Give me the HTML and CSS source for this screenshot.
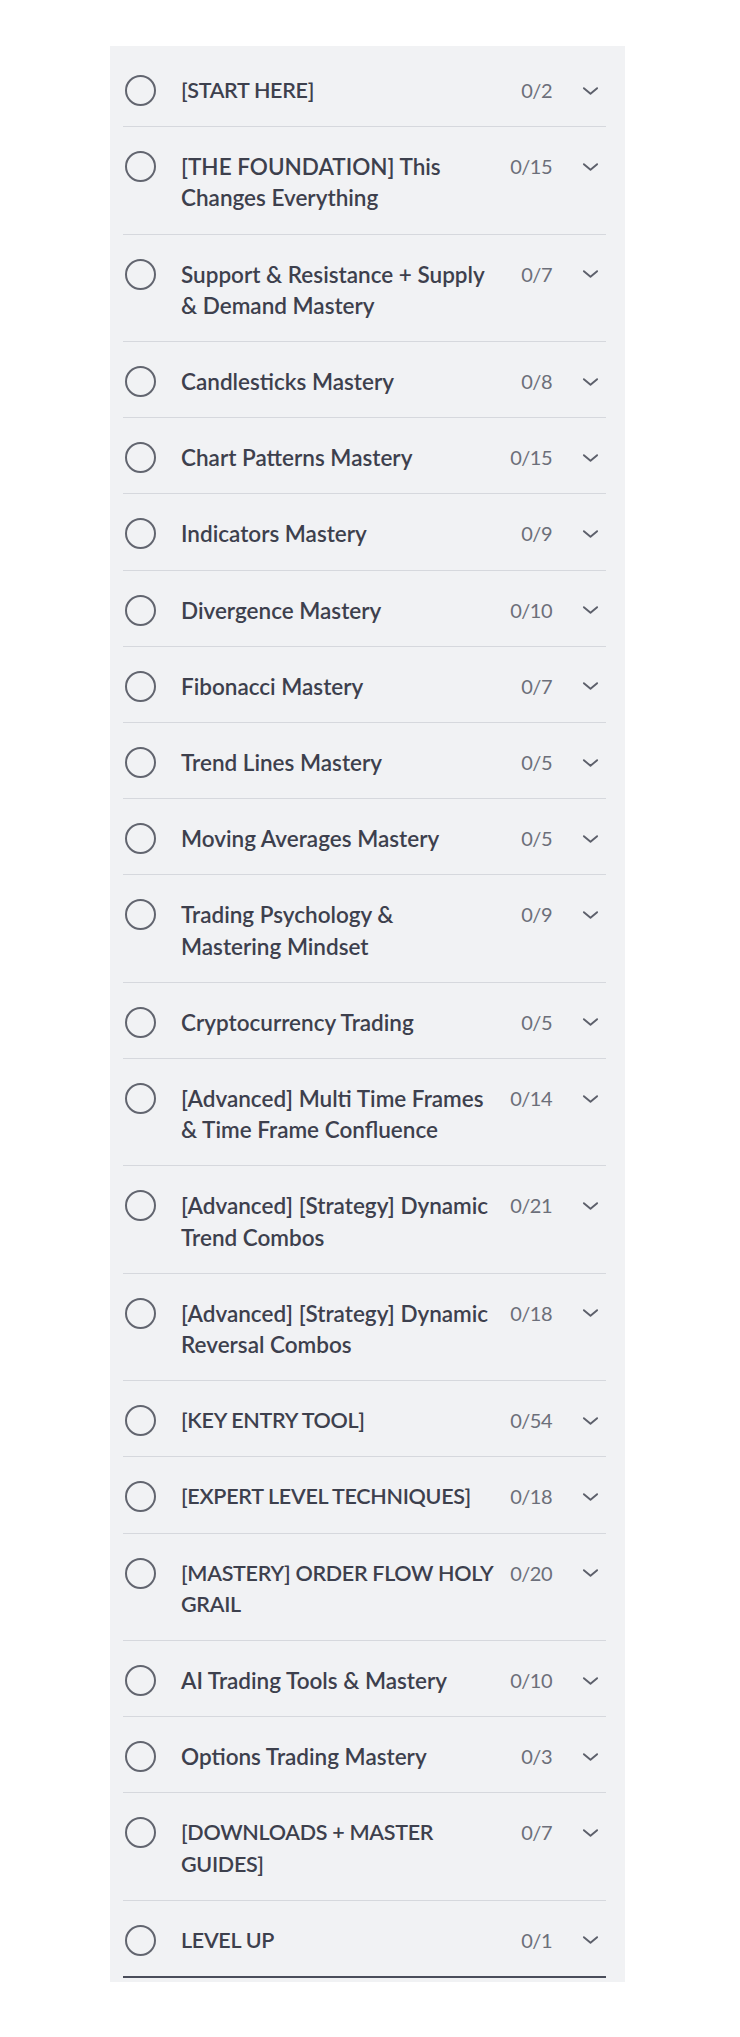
FILE: index.html
```html
<!DOCTYPE html>
<html lang="en">
<head>
<meta charset="utf-8">
<title>Course sections</title>
<link rel="stylesheet" href="styles.css">
</head>
<body>
<div class="panel">
  <ul class="sections">
    <li class="row"><span class="check"></span><span class="title caps">[START HERE]</span><span class="count">0/2</span><span class="chev"><svg viewBox="0 0 18 10"><path d="M2 2l7 6 7-6"/></svg></span></li>
    <li class="row"><span class="check"></span><span class="title">[THE FOUNDATION] This Changes Everything</span><span class="count">0/15</span><span class="chev"><svg viewBox="0 0 18 10"><path d="M2 2l7 6 7-6"/></svg></span></li>
    <li class="row"><span class="check"></span><span class="title">Support &amp; Resistance + Supply &amp; Demand Mastery</span><span class="count">0/7</span><span class="chev"><svg viewBox="0 0 18 10"><path d="M2 2l7 6 7-6"/></svg></span></li>
    <li class="row"><span class="check"></span><span class="title">Candlesticks Mastery</span><span class="count">0/8</span><span class="chev"><svg viewBox="0 0 18 10"><path d="M2 2l7 6 7-6"/></svg></span></li>
    <li class="row"><span class="check"></span><span class="title">Chart Patterns Mastery</span><span class="count">0/15</span><span class="chev"><svg viewBox="0 0 18 10"><path d="M2 2l7 6 7-6"/></svg></span></li>
    <li class="row"><span class="check"></span><span class="title">Indicators Mastery</span><span class="count">0/9</span><span class="chev"><svg viewBox="0 0 18 10"><path d="M2 2l7 6 7-6"/></svg></span></li>
    <li class="row"><span class="check"></span><span class="title">Divergence Mastery</span><span class="count">0/10</span><span class="chev"><svg viewBox="0 0 18 10"><path d="M2 2l7 6 7-6"/></svg></span></li>
    <li class="row"><span class="check"></span><span class="title">Fibonacci Mastery</span><span class="count">0/7</span><span class="chev"><svg viewBox="0 0 18 10"><path d="M2 2l7 6 7-6"/></svg></span></li>
    <li class="row"><span class="check"></span><span class="title">Trend Lines Mastery</span><span class="count">0/5</span><span class="chev"><svg viewBox="0 0 18 10"><path d="M2 2l7 6 7-6"/></svg></span></li>
    <li class="row"><span class="check"></span><span class="title">Moving Averages Mastery</span><span class="count">0/5</span><span class="chev"><svg viewBox="0 0 18 10"><path d="M2 2l7 6 7-6"/></svg></span></li>
    <li class="row"><span class="check"></span><span class="title">Trading Psychology &amp; Mastering Mindset</span><span class="count">0/9</span><span class="chev"><svg viewBox="0 0 18 10"><path d="M2 2l7 6 7-6"/></svg></span></li>
    <li class="row"><span class="check"></span><span class="title">Cryptocurrency Trading</span><span class="count">0/5</span><span class="chev"><svg viewBox="0 0 18 10"><path d="M2 2l7 6 7-6"/></svg></span></li>
    <li class="row"><span class="check"></span><span class="title">[Advanced] Multi Time Frames &amp; Time Frame Confluence</span><span class="count">0/14</span><span class="chev"><svg viewBox="0 0 18 10"><path d="M2 2l7 6 7-6"/></svg></span></li>
    <li class="row"><span class="check"></span><span class="title">[Advanced] [Strategy] Dynamic Trend Combos</span><span class="count">0/21</span><span class="chev"><svg viewBox="0 0 18 10"><path d="M2 2l7 6 7-6"/></svg></span></li>
    <li class="row"><span class="check"></span><span class="title">[Advanced] [Strategy] Dynamic Reversal Combos</span><span class="count">0/18</span><span class="chev"><svg viewBox="0 0 18 10"><path d="M2 2l7 6 7-6"/></svg></span></li>
    <li class="row"><span class="check"></span><span class="title caps">[KEY ENTRY TOOL]</span><span class="count">0/54</span><span class="chev"><svg viewBox="0 0 18 10"><path d="M2 2l7 6 7-6"/></svg></span></li>
    <li class="row"><span class="check"></span><span class="title caps">[EXPERT LEVEL TECHNIQUES]</span><span class="count">0/18</span><span class="chev"><svg viewBox="0 0 18 10"><path d="M2 2l7 6 7-6"/></svg></span></li>
    <li class="row"><span class="check"></span><span class="title caps">[MASTERY] ORDER FLOW HOLY GRAIL</span><span class="count">0/20</span><span class="chev"><svg viewBox="0 0 18 10"><path d="M2 2l7 6 7-6"/></svg></span></li>
    <li class="row"><span class="check"></span><span class="title">AI Trading Tools &amp; Mastery</span><span class="count">0/10</span><span class="chev"><svg viewBox="0 0 18 10"><path d="M2 2l7 6 7-6"/></svg></span></li>
    <li class="row"><span class="check"></span><span class="title">Options Trading Mastery</span><span class="count">0/3</span><span class="chev"><svg viewBox="0 0 18 10"><path d="M2 2l7 6 7-6"/></svg></span></li>
    <li class="row"><span class="check"></span><span class="title caps">[DOWNLOADS + MASTER GUIDES]</span><span class="count">0/7</span><span class="chev"><svg viewBox="0 0 18 10"><path d="M2 2l7 6 7-6"/></svg></span></li>
    <li class="row row-last"><span class="check"></span><span class="title caps">LEVEL UP</span><span class="count">0/1</span><span class="chev"><svg viewBox="0 0 18 10"><path d="M2 2l7 6 7-6"/></svg></span></li>
  </ul>
</div>
</body>
</html>
```

FILE: styles.css
```css
html, body {
  margin: 0;
  padding: 0;
  background: #ffffff;
}

body {
  font-family: Lato, "Open Sans", "Liberation Sans", sans-serif;
  color: #424552;
}

.panel {
  width: 515px;
  margin: 46px 0 0 110px;
  background: #f1f2f4;
  padding: 5px 19px 4px 13px;
  box-sizing: border-box;
}

.sections {
  list-style: none;
  margin: 0;
  padding: 0;
}

.row {
  display: flex;
  align-items: flex-start;
  padding: 24px 7px 20px 2px;
  border-bottom: 1px solid #d6d8dd;
  font-size: 22.5px;
  line-height: 31.2px;
}

.row-last {
  border-bottom: 2px solid #4a4d5a;
}

.check {
  flex: none;
  width: 31px;
  height: 31px;
  box-sizing: border-box;
  border: 2px solid #62656f;
  border-radius: 50%;
  margin-right: 25px;
}

.title {
  flex: 1;
  font-weight: 600;
  color: #3d404d;
}

.caps {
  font-size: 21.5px;
  letter-spacing: -0.3px;
}

.count {
  flex: none;
  width: 46px;
  margin-left: 13px;
  text-align: right;
  color: #6c6f7a;
  font-weight: 400;
  font-size: 20px;
  letter-spacing: -0.5px;
}

.chev {
  flex: none;
  width: 17px;
  height: 31px;
  margin-left: 30px;
  display: flex;
  align-items: center;
}

.chev svg {
  width: 17px;
  height: 10px;
  fill: none;
  stroke: #5d606b;
  stroke-width: 2;
  stroke-linecap: round;
  stroke-linejoin: round;
}
```
